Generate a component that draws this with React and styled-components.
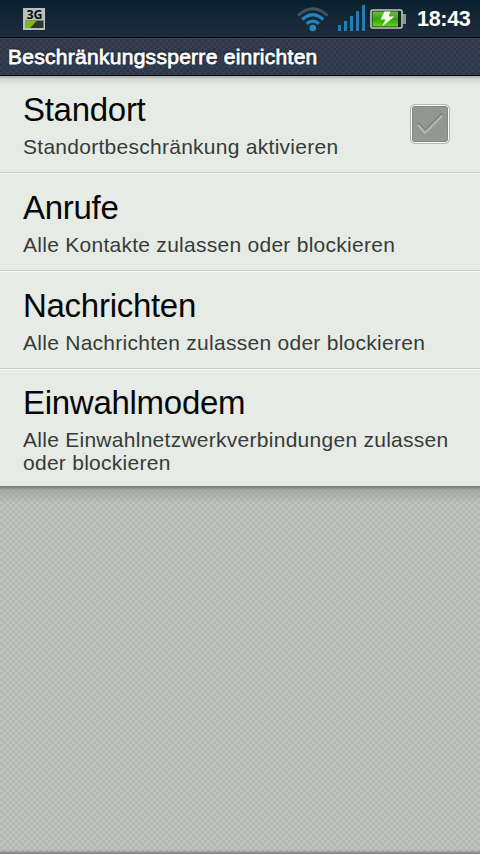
import styled, { createGlobalStyle } from "styled-components";

const GlobalStyle = createGlobalStyle`
  * {
    box-sizing: border-box;
  }

  body {
    margin: 0;
    font-family: "Liberation Sans", Arial, sans-serif;
  }
`;

const Screen = styled.div`
  display: flex;
  flex-direction: column;
  width: 480px;
  height: 854px;
  overflow: hidden;
  background-color: #b9bebb;
`;

const StatusBar = styled.header`
  display: flex;
  align-items: center;
  flex: none;
  height: 38px;
  padding: 0 10px 0 23px;
  background: linear-gradient(#07202c, #142736 45%, #1e2b3a 95%);
  border-bottom: 1px solid #05080d;
`;

const StatusIcons = styled.div`
  display: flex;
  align-items: center;
  margin-left: auto;
`;

const Clock = styled.time`
  width: 53px;
  margin-left: 10px;
  font-size: 21.5px;
  font-weight: 700;
  line-height: 36px;
  letter-spacing: -0.3px;
  white-space: nowrap;
  color: #fff;
`;

const TitleBar = styled.div`
  flex: none;
  height: 38px;
  padding-left: 8px;
  background:
    conic-gradient(#ffffff0a 25%, #0000 0 50%, #ffffff0a 0 75%, #0000 0) 0 0 /
      6px 6px,
    linear-gradient(#2f3849, #2b364a);
  border-top: 1px solid #394454;
  border-bottom: 1px solid #05070b;
`;

const Title = styled.h1`
  margin: 0;
  font-size: 21px;
  font-weight: 400;
  line-height: 36px;
  letter-spacing: 0.28px;
  white-space: nowrap;
  color: #fff;
  -webkit-text-stroke: 0.8px #fff;
  text-shadow: 0 -1px 2px #000;
`;

const List = styled.ul`
  flex: none;
  margin: 0;
  padding: 0;
  list-style: none;
  background:
    linear-gradient(#a4a9a6, #d2d7d3 3px, #e6ebe6 9px) 0 0 / 100% 9px no-repeat,
    #e6ebe6;
`;

const Row = styled.li`
  display: flex;
  justify-content: space-between;
  height: ${({ $height }) => $height}px;
  padding: ${({ $top }) => $top}px 30px 0 23px;
  border-bottom: ${({ $last }) => ($last ? "none" : "1px solid #c7ccc8")};
  box-shadow: ${({ $first }) => ($first ? "none" : "inset 0 1px #f8fbf8")};
`;

const RowTitle = styled.div`
  font-size: 33px;
  line-height: 41px;
  letter-spacing: -0.28px;
  color: #050605;
`;

const Summary = styled.div`
  margin-top: 5px;
  font-size: 21px;
  line-height: 23px;
  letter-spacing: 0.27px;
  white-space: pre-line;
  color: #373b38;
`;

const CheckBox = styled.div`
  display: grid;
  place-items: center;
  width: 40px;
  height: 40px;
  margin-top: 15px;
  background:
    repeating-linear-gradient(45deg, #ffffff0d 0 1px, #0000 1px 3px),
    #929592;
  background-clip: padding-box;
  border: 1px solid #b4b9b5;
  border-radius: 5px;
  box-shadow:
    inset 0 0 0 1px #fbfdfb,
    inset 0 0 0 2px #848884;
`;

const Backdrop = styled.main`
  flex: 1;
  background:
    linear-gradient(#747b76, #9ba09dc0 4px, #b0b6b200 18px) 0 0 / 100% 18px
      no-repeat,
    linear-gradient(#0000, #777c78) 0 100% / 100% 4px no-repeat,
    conic-gradient(#c1c5c2 25%, #b3b8b5 0 50%, #c1c5c2 0 75%, #b3b8b5 0) 0 0 /
      6px 6px;
`;

function NetworkIcon() {
  return (
    <svg width="22" height="22" viewBox="0 0 22 22" overflow="visible">
      <rect width="22" height="22" fill="#bcc1c0" />
      <text
        x="11.5"
        y="10.5"
        textAnchor="middle"
        fontFamily="Noto Sans, sans-serif"
        fontSize="12.5"
        fontWeight="700"
        fill="#080d0c"
      >
        3G
      </text>
      <rect x="2" y="12.5" width="18.5" height="7.5" fill="#303432" />
      <path d="M2 12.5h12L7 20H2z" fill="#83b51c" />
    </svg>
  );
}

function WifiIcon() {
  return (
    <svg width="34" height="26" viewBox="0 0 34 26" fill="none">
      <path d="M2 9.5Q16.8-4 31.6 9.5" stroke="#46535b" strokeWidth="3" />
      <path
        d="M6.3 13.5q10.5-9.4 21 0M10.6 17.8q6.2-5.4 12.4 0"
        stroke="#2483b8"
        strokeWidth="3.3"
      />
      <circle cx="16.8" cy="22" r="3.3" fill="#2788bd" />
    </svg>
  );
}

const SignalSvg = styled.svg`
  margin: 0 5px 2px 8px;
`;

const signalBars = [6, 10, 15, 20, 26];

function SignalIcon() {
  return (
    <SignalSvg width="27" height="26" viewBox="0 0 27 26">
      {signalBars.map((bar, i) => (
        <rect
          key={bar}
          x={i * 6}
          y={26 - bar}
          width="3"
          height={bar}
          fill="#247caf"
        />
      ))}
    </SignalSvg>
  );
}

function BatteryIcon() {
  return (
    <svg width="37" height="20" viewBox="0 0 37 20">
      <defs>
        <linearGradient id="charge" x2="0" y2="1">
          <stop offset="0" stopColor="#6fbe36" />
          <stop offset="0.5" stopColor="#32a40d" />
          <stop offset="1" stopColor="#62d314" />
        </linearGradient>
      </defs>
      <rect x="33" y="5" width="3" height="10" fill="#8a9296" />
      <rect
        x="1"
        y="1"
        width="31"
        height="18"
        rx="1.5"
        fill="#182419"
        stroke="#c3c9c5"
        strokeWidth="1.6"
      />
      <rect x="2.5" y="2.5" width="25.5" height="15" fill="url(#charge)" />
      <path d="M14.5 2.5h6l-2 5h6L12 17.5l3.5-7h-5z" fill="#f5fff0" />
    </svg>
  );
}

function CheckIcon() {
  return (
    <svg width="28" height="24" viewBox="0 0 28 24" fill="none">
      <path d="M2 11l7 8L26 2" stroke="#7c807c" strokeWidth="2.5" />
      <path d="M2 12.8l7 8L26 3.8" stroke="#b2b6b2" strokeWidth="2.2" />
    </svg>
  );
}

const settings = [
  {
    title: "Standort",
    summary: "Standortbeschränkung aktivieren",
    height: 97,
    top: 13,
    checkable: true,
  },
  {
    title: "Anrufe",
    summary: "Alle Kontakte zulassen oder blockieren",
    height: 98,
    top: 14,
  },
  {
    title: "Nachrichten",
    summary: "Alle Nachrichten zulassen oder blockieren",
    height: 98,
    top: 14,
  },
  {
    title: "Einwahlmodem",
    summary: "Alle Einwahlnetzwerkverbindungen zulassen\noder blockieren",
    height: 117,
    top: 13,
  },
];

function SettingRow({ setting, first, last }) {
  const { title, summary, height, top, checkable } = setting;

  return (
    <Row $height={height} $top={top} $first={first} $last={last}>
      <div>
        <RowTitle>{title}</RowTitle>
        <Summary>{summary}</Summary>
      </div>

      {checkable && (
        <CheckBox>
          <CheckIcon />
        </CheckBox>
      )}
    </Row>
  );
}

function App() {
  return (
    <>
      <GlobalStyle />
      <Screen>
        <StatusBar>
          <NetworkIcon />
          <StatusIcons>
            <WifiIcon />
            <SignalIcon />
            <BatteryIcon />
            <Clock>18:43</Clock>
          </StatusIcons>
        </StatusBar>

        <TitleBar>
          <Title>Beschränkungssperre einrichten</Title>
        </TitleBar>

        <List>
          {settings.map((setting, i) => (
            <SettingRow
              key={setting.title}
              setting={setting}
              first={i === 0}
              last={i === settings.length - 1}
            />
          ))}
        </List>

        <Backdrop />
      </Screen>
    </>
  );
}

export default App;
